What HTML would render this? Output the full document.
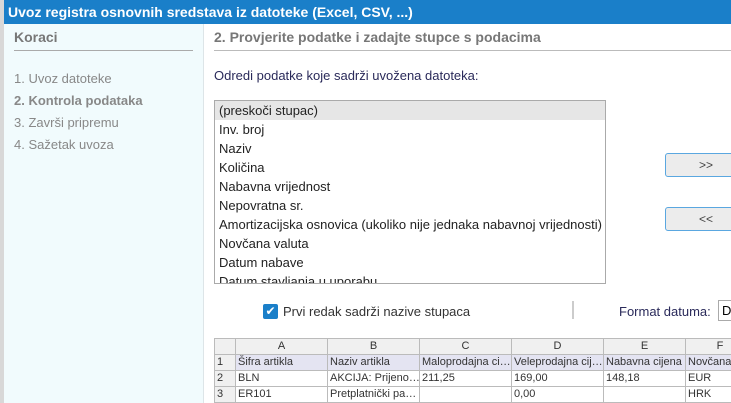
<!DOCTYPE html><html><head><style>
body{margin:0;width:731px;height:403px;overflow:hidden;background:#fff;font-family:"Liberation Sans",sans-serif;position:relative}
.abs{position:absolute}
.bg{left:0;top:0;width:4px;height:403px;background:#d8d8d8}
.title{left:4px;top:0;width:727px;height:24px;background:#1a7fc9;color:#fff;font-size:14px;font-weight:bold;line-height:24px;padding-left:4px;box-sizing:border-box}
.left{left:4px;top:24px;width:199px;height:379px;background:#f1fbfd;border-right:1px solid #dde5e8}
.left h3{margin:0;position:absolute;left:10px;top:5px;font-size:14px;color:#777;font-weight:bold}
.left .hr{position:absolute;left:10px;top:26px;width:179px;height:1px;background:#aaa}
.step{position:absolute;left:10px;font-size:13px;color:#888}
.rh{left:214px;top:29px;font-size:14px;color:#777;font-weight:bold}
.rhr{left:214px;top:50px;width:517px;height:1px;background:#bbb}
.lb{left:214px;top:100px;width:392px;height:184px;border:1px solid #aaa;box-sizing:border-box;overflow:hidden;font-size:13px;color:#222}
.lb div{height:19px;line-height:19px;padding-left:4px}
.btn{left:665px;width:80px;height:22px;border:1px solid #5aa7e0;border-radius:3px;background:#ececec;font-size:12px;color:#444;text-align:center;line-height:22px}
table{border-collapse:collapse;font-size:11px;color:#333;table-layout:fixed}
td{border:1px solid #bbb;height:15px;padding:0 2px;white-space:nowrap;overflow:hidden;line-height:15px}
tr.h td{background:#f0f0f0;text-align:center}
tr.r1 td{background:#e4e4f2}
td.n{background:#f0f0f0!important;text-align:left}
</style></head><body>
<div class="abs bg"></div>
<div class="abs title">Uvoz registra osnovnih sredstava iz datoteke (Excel, CSV, ...)</div>
<div class="abs left"><h3>Koraci</h3><div class="hr"></div>
<div class="step" style="top:47px">1. Uvoz datoteke</div>
<div class="step" style="top:69px;font-weight:bold">2. Kontrola podataka</div>
<div class="step" style="top:91px">3. Završi pripremu</div>
<div class="step" style="top:113px">4. Sažetak uvoza</div></div>
<div class="abs rh">2. Provjerite podatke i zadajte stupce s podacima</div>
<div class="abs rhr"></div>
<div class="abs" style="left:214px;top:68px;font-size:13px;color:#2a2a5a">Odredi podatke koje sadrži uvožena datoteka:</div>
<div class="abs lb">
<div style="background:#e6e6e6">(preskoči stupac)</div><div>Inv. broj</div><div>Naziv</div><div>Količina</div><div>Nabavna vrijednost</div><div>Nepovratna sr.</div><div>Amortizacijska osnovica (ukoliko nije jednaka nabavnoj vrijednosti)</div><div>Novčana valuta</div><div>Datum nabave</div><div>Datum stavljanja u uporabu</div></div>
<div class="abs btn" style="top:153px">&gt;&gt;</div>
<div class="abs btn" style="top:207px">&lt;&lt;</div>
<div class="abs" style="left:263px;top:304px;width:15px;height:15px;background:#1a7fc9;border-radius:2px;color:#fff;font-size:12px;line-height:15px;text-align:center">✔</div>
<div class="abs" style="left:283px;top:304px;font-size:13px;color:#333">Prvi redak sadrži nazive stupaca</div>
<div class="abs" style="left:572px;top:301px;width:2px;height:18px;background:#ccc"></div>
<div class="abs" style="left:619px;top:304px;font-size:13px;color:#2a2a5a">Format datuma:</div>
<div class="abs" style="left:718px;top:300px;width:20px;height:21px;border:1px solid #aaa;box-sizing:border-box;font-size:13px;padding-left:3px;line-height:19px">D</div>
<table class="abs" style="left:214px;top:338px;width:540px">
<colgroup><col style="width:21px"><col style="width:92px"><col style="width:92px"><col style="width:92px"><col style="width:92px"><col style="width:82px"><col style="width:69px"></colgroup>
<tr class="h"><td></td><td>A</td><td>B</td><td>C</td><td>D</td><td>E</td><td>F</td></tr>
<tr class="r1"><td class="n">1</td><td>Šifra artikla</td><td>Naziv artikla</td><td>Maloprodajna ci…</td><td>Veleprodajna cij…</td><td>Nabavna cijena</td><td>Novčana</td></tr>
<tr><td class="n">2</td><td>BLN</td><td>AKCIJA: Prijeno…</td><td>211,25</td><td>169,00</td><td>148,18</td><td>EUR</td></tr>
<tr><td class="n">3</td><td>ER101</td><td>Pretplatnički pa…</td><td></td><td>0,00</td><td></td><td>HRK</td></tr>
</table>
</body></html>
